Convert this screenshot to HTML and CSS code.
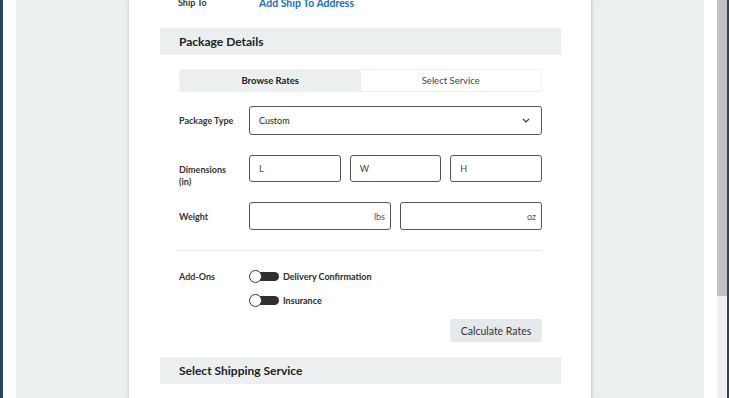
FILE: index.html
```html
<!DOCTYPE html>
<html>
<head>
<meta charset="utf-8">
<link rel="stylesheet" href="styles.css">
</head>
<body>
<div class="frame">
  <div class="edge-left"></div>
  <div class="gutter"></div>
  <div class="side side-left"></div>
  <main class="card">
    <div class="row ship-row">
      <div class="label">Ship To</div>
      <a class="link">Add Ship To Address</a>
    </div>
    <div class="section-head">Package Details</div>
    <div class="body">
      <div class="tabs">
        <div class="tab active">Browse Rates</div>
        <div class="tab">Select Service</div>
      </div>
      <div class="row row-type">
        <div class="label">Package Type</div>
        <div class="field select">
          <span>Custom</span>
          <svg class="chev" width="8" height="5" viewBox="0 0 8 5"><path d="M1 1l3 3 3-3" fill="none" stroke="#333" stroke-width="1.1"/></svg>
        </div>
      </div>
      <div class="row row-dim">
        <div class="label">Dimensions<br>(in)</div>
        <div class="inputs three">
          <div class="field">L</div>
          <div class="field">W</div>
          <div class="field">H</div>
        </div>
      </div>
      <div class="row row-weight">
        <div class="label">Weight</div>
        <div class="inputs two">
          <div class="field right">lbs</div>
          <div class="field right">oz</div>
        </div>
      </div>
      <div class="sep"></div>
      <div class="row row-addons">
        <div class="label">Add-Ons</div>
        <div class="toggles">
          <div class="toggle-line"><span class="toggle"><span class="knob"></span></span>Delivery Confirmation</div>
          <div class="toggle-line"><span class="toggle"><span class="knob"></span></span>Insurance</div>
        </div>
      </div>
      <div class="actions"><button class="btn">Calculate Rates</button></div>
    </div>
    <div class="section-head">Select Shipping Service</div>
  </main>
  <div class="side side-right"></div>
  <div class="gutter"></div>
  <div class="scrollbar"><div class="thumb"></div></div>
  <div class="edge-right"></div>
</div>
</body>
</html>
```
FILE: styles.css
```css
html, body {
  margin: 0;
  padding: 0;
  background: #fff;
  overflow: hidden;
}
body {
  font-family: Lato, "Open Sans", sans-serif;
  color: #2b2b2b;
}
.frame {
  display: flex;
  height: 398px;
  width: 729px;
}
.edge-left {
  width: 3px;
  background: #2d4460;
}
.edge-right {
  width: 2px;
  background: #2d4460;
}
.gutter {
  width: 13px;
  background: #fff;
}
.side {
  width: 113px;
  background: #ebeff0;
}
.side-left {
  box-shadow: inset -3px 0 3px -2px rgba(0,0,0,0.12);
}
.side-right {
  box-shadow: inset 3px 0 3px -2px rgba(0,0,0,0.18);
}
.scrollbar {
  width: 10px;
  background: #f0f0f0;
  display: flex;
  flex-direction: column;
}
.thumb {
  height: 296px;
  background: #c1c1c1;
}
.card {
  width: 462px;
  background: #fff;
  padding: 0 30px 0 31px;
  box-sizing: border-box;
  display: flex;
  flex-direction: column;
}
.ship-row {
  margin-top: -4px;
  height: 14px;
  align-items: center;
  padding-left: 18px;
}
.ship-row .label {
  font-size: 9px;
  width: 81px;
}
.link {
  color: #1b6db5;
  font-weight: 700;
  font-size: 10.5px;
}
.section-head {
  margin-top: 18px;
  height: 27px;
  background: #ebeff0;
  padding-left: 19px;
  font-weight: 700;
  font-size: 12px;
  line-height: 27px;
  color: #222;
}
.body {
  padding: 14px 19px 15px 19px;
  display: flex;
  flex-direction: column;
}
.tabs {
  display: flex;
  height: 23px;
  border: 1px solid #eef0f1;
  border-radius: 2px;
  box-sizing: border-box;
}
.tab {
  flex: 1;
  text-align: center;
  font-size: 9.5px;
  line-height: 21px;
  color: #444;
}
.tab.active {
  background: #ebeff0;
  font-weight: 700;
  color: #222;
}
.row {
  display: flex;
  align-items: center;
}
.label {
  width: 70px;
  flex: none;
  font-size: 9px;
  font-weight: 700;
  color: #333;
  line-height: 12px;
}
.row-type {
  margin-top: 14px;
}
.field {
  height: 29px;
  border: 1px solid #555;
  border-radius: 3px;
  box-sizing: border-box;
  padding: 0 9px;
  font-size: 9px;
  color: #444;
  display: flex;
  align-items: center;
}
.select {
  flex: 1;
  justify-content: space-between;
  color: #222;
}
.chev {
  margin-right: 2px;
}
.row-dim {
  margin-top: 20px;
  height: 27px;
  align-items: flex-start;
}
.row-dim .field {
  height: 27px;
}
.row-dim .label {
  padding-top: 9px;
}
.inputs {
  flex: 1;
  display: grid;
  gap: 9px;
}
.inputs.three {
  grid-template-columns: 1fr 1fr 1fr;
}
.inputs.two {
  grid-template-columns: 1fr 1fr;
}
.row-weight {
  margin-top: 20px;
  height: 28px;
  align-items: flex-start;
}
.row-weight .field {
  height: 28px;
}
.row-weight .label {
  padding-top: 9px;
}
.field.right {
  justify-content: flex-end;
  padding-right: 5px;
  color: #555;
}
.sep {
  margin-top: 20px;
  height: 1px;
  background: #e4e6e7;
}
.row-addons {
  margin-top: 19px;
  align-items: flex-start;
}
.row-addons .label {
  line-height: 13px;
}
.toggles {
  display: flex;
  flex-direction: column;
  gap: 11px;
}
.toggle-line {
  display: flex;
  align-items: center;
  font-size: 9px;
  font-weight: 700;
  color: #2b2b2b;
  height: 13px;
}
.toggle {
  position: relative;
  width: 30px;
  height: 13px;
  margin-right: 4px;
  display: inline-block;
}
.toggle::before {
  content: "";
  position: absolute;
  left: 6px;
  right: 0;
  top: 2px;
  height: 9px;
  background: #2f2f2f;
  border-radius: 0 5px 5px 0;
}
.knob {
  position: absolute;
  left: 0;
  top: 0;
  width: 13px;
  height: 13px;
  box-sizing: border-box;
  border-radius: 50%;
  background: #fff;
  border: 1px solid #333;
}
.actions {
  display: flex;
  justify-content: flex-end;
  margin-top: 12px;
}
.btn {
  height: 23px;
  width: 92px;
  border: none;
  border-radius: 3px;
  background: #e6e9eb;
  font-family: Lato, "Open Sans", sans-serif;
  font-size: 10.5px;
  color: #333;
  padding: 0;
}
.body + .section-head {
  margin-top: 0;
}
```
